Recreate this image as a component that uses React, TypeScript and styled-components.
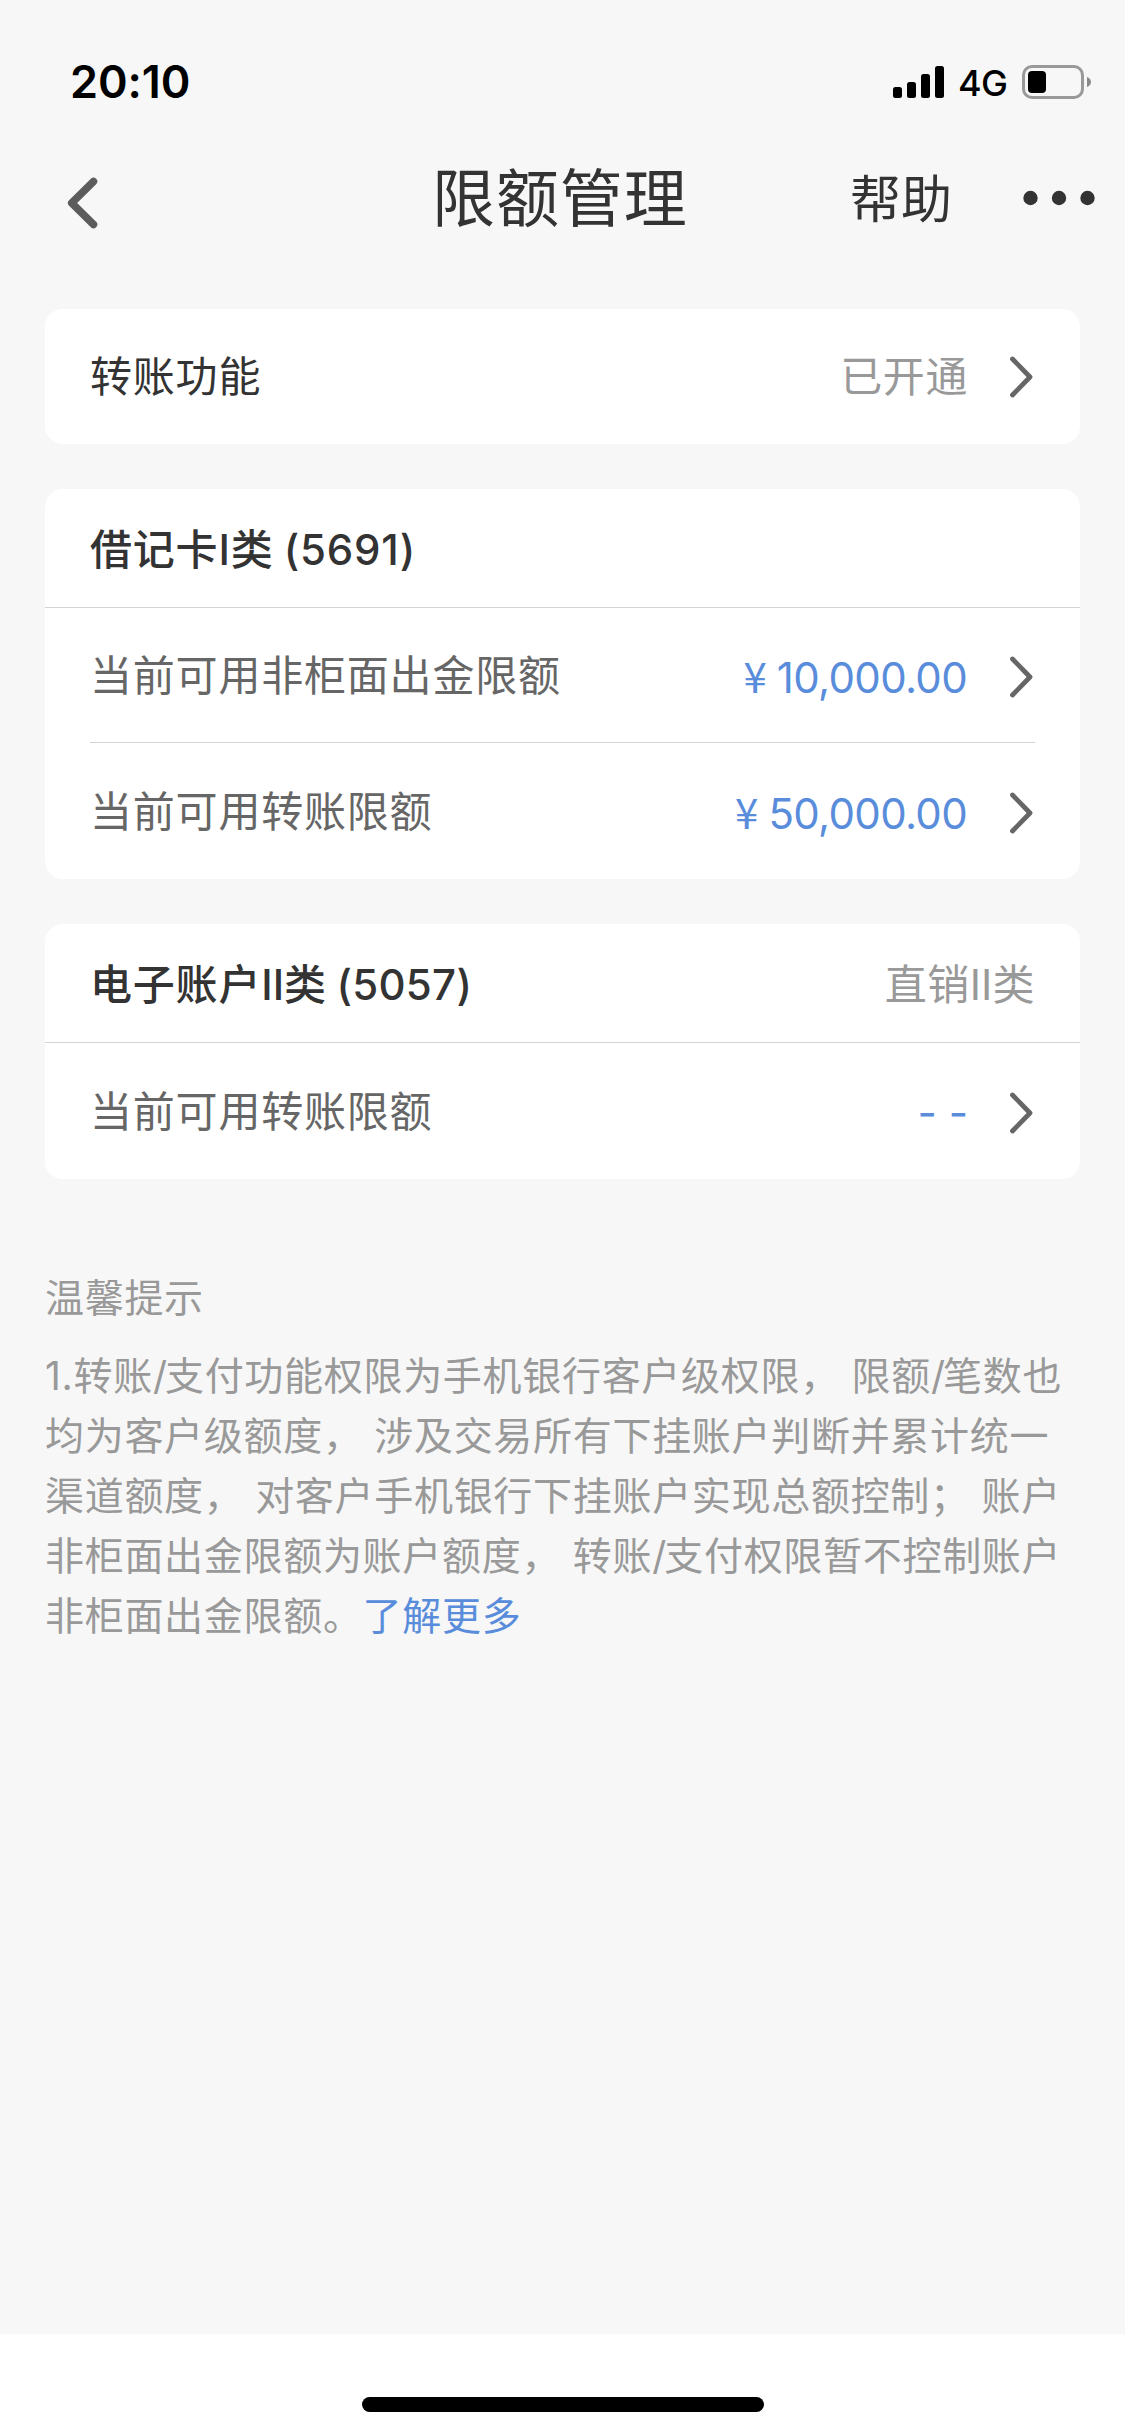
import React, { Fragment } from "react";
import styled, { createGlobalStyle } from "styled-components";

const GlobalStyle = createGlobalStyle`
  * { box-sizing: border-box; }
  body {
    margin: 0;
    background: #f7f7f7;
    font-family: Inter, "Noto Sans CJK SC", sans-serif;
    -webkit-font-smoothing: antialiased;
  }
`;

const Screen = styled.div`
  display: flex;
  flex-direction: column;
  width: 1125px;
  height: 2436px;
  overflow: hidden;
  background: #f7f7f7;
`;

const StatusBar = styled.div`
  display: flex;
  align-items: center;
  justify-content: space-between;
  height: 132px;
  padding: 32px 33px 0 70px;
  color: #000;
`;

const Clock = styled.span`
  font-size: 45px;
  line-height: 54px;
  font-weight: 600;
  letter-spacing: -0.1px;
`;

const Indicators = styled.div`
  display: flex;
  align-items: center;
`;

const Network = styled.span`
  margin: 2px 15px 0 14px;
  font-size: 36px;
  line-height: 44px;
  font-weight: 500;
  letter-spacing: -0.8px;
`;

const NavBar = styled.header`
  display: grid;
  grid-template-columns: 365px 257px 1fr;
  align-items: center;
  height: 132px;
  padding: 0 30px 0 67px;
  color: #333;
`;

const BackButton = styled.button`
  display: flex;
  width: 60px;
  padding: 9px 0 0;
  border: 0;
  background: none;
`;

const Title = styled.h1`
  margin: 0;
  font-size: 63px;
  line-height: 90px;
  font-weight: 400;
  letter-spacing: 0.9px;
  white-space: nowrap;
`;

const NavActions = styled.div`
  display: flex;
  align-items: center;
  justify-content: flex-end;
  gap: 71px;
`;

const Help = styled.span`
  padding-top: 3px;
  font-size: 51px;
  line-height: 74px;
`;

const Content = styled.main`
  display: flex;
  flex: 1;
  flex-direction: column;
  gap: 45px;
  padding: 45px 45px 0;
`;

const Card = styled.section`
  border-radius: 18px;
  background: #fff;
`;

const CardHeader = styled.div`
  display: flex;
  align-items: center;
  justify-content: space-between;
  height: 119px;
  padding: 3px 45px 0;
  border-bottom: 1px solid #d4d4d4;
`;

const CardTitle = styled.h2`
  margin: 0;
  color: #333;
  font-size: 42px;
  line-height: 60px;
  font-weight: 500;
  letter-spacing: 0.8px;
`;

const Roman = styled.span<{ $spacing?: number }>`
  letter-spacing: ${(p) => p.$spacing ?? 0}px;
`;

const CardNumber = styled.span<{ $spacing?: number }>`
  letter-spacing: ${(p) => p.$spacing ?? 0.3}px;
  word-spacing: -2px;
`;

const Muted = styled.span`
  color: #999;
  font-size: 42px;
  line-height: 60px;
  letter-spacing: 0.6px;
`;

const Row = styled.div<{ $divided?: boolean; $height: number }>`
  display: flex;
  align-items: center;
  height: ${(p) => p.$height}px;
  margin: 0 45px;
  padding-top: 1px;
  border-bottom: ${(p) => (p.$divided ? "1px solid #d4d4d4" : "0")};
`;

const Label = styled.span<{ $strong?: boolean }>`
  flex: 1;
  color: ${(p) => (p.$strong ? "#333" : "#666")};
  font-size: 42px;
  line-height: 60px;
  letter-spacing: 0.8px;
`;

const Value = styled.span`
  display: flex;
  align-items: center;
  gap: 41px;
`;

const Amount = styled.span`
  padding-top: 2px;
  color: #598ddb;
  font-size: 42px;
  line-height: 60px;
`;

const Yen = styled.span`
  margin-right: 10px;
  font-family: "Noto Sans CJK SC", sans-serif;
`;

const Digits = styled.span`
  margin-right: 1px;
  letter-spacing: -0.65px;
`;

const Tips = styled.section`
  padding-top: 44px;
  color: #999;
  font-size: 39px;
  line-height: 60px;
  letter-spacing: 0.7px;
`;

const TipsTitle = styled.h3`
  margin: 0 0 18px;
  font-size: inherit;
  font-weight: 400;
`;

const TipsLine = styled.p`
  margin: 0;
  white-space: pre;
`;

const Slash = styled.span`
  letter-spacing: -2px;
`;

const Link = styled.a`
  color: #598ddb;
`;

const HomeArea = styled.footer`
  display: flex;
  justify-content: center;
  height: 102px;
  padding-top: 63px;
  background: #fff;
`;

const HomeIndicator = styled.div`
  width: 402px;
  height: 15px;
  border-radius: 8px;
  background: #000;
`;

const SignalIcon = () => (
  <svg width="51" height="34" viewBox="0 0 51 34">
    <rect x="0" y="22" width="9" height="11" rx="2.5" />
    <rect x="14" y="17" width="9" height="16" rx="2.5" />
    <rect x="28" y="9" width="9" height="24" rx="2.5" />
    <rect x="42" y="1" width="9" height="32" rx="2.5" />
  </svg>
);

const BatteryIcon = () => (
  <svg width="70" height="34" viewBox="0 0 70 34">
    <rect x="1.5" y="1.5" width="59" height="31" rx="8.5" fill="none" stroke="#999" strokeWidth="3" />
    <rect x="6" y="6" width="18" height="22" rx="4" />
    <path d="M65 12c2.4.8 4 2.700 4 5s-1.600 4.200-4 5z" fill="#8a8a8a" />
  </svg>
);

const BackIcon = () => (
  <svg width="31" height="52" viewBox="0 0 31 52">
    <path d="M26.500 4.500 4.700 26l21.800 21.500" fill="none" stroke="#5c5c5c" strokeWidth="7.500" strokeLinecap="round" strokeLinejoin="round" />
  </svg>
);

const MoreIcon = () => (
  <svg width="72" height="16" viewBox="0 0 72 16" fill="#333">
    <circle cx="7.500" cy="8" r="7.200" />
    <circle cx="36" cy="8" r="7.200" />
    <circle cx="64.500" cy="8" r="7.200" />
  </svg>
);

const Arrow = styled.svg.attrs({ width: 26, height: 44, viewBox: "0 0 26 44" })<{ $drop?: number }>`
  margin-top: ${(p) => p.$drop ?? 0}px;
  fill: none;
  stroke: #666;
  stroke-width: 4.8;
  stroke-linecap: round;
  stroke-linejoin: round;
`;

const Chevron = ({ drop }: { drop?: number }) => (
  <Arrow $drop={drop}>
    <path d="M3.500 4 21 22 3.500 40" />
  </Arrow>
);

interface LimitRowProps {
  label: string;
  amount?: string;
  divided?: boolean;
}

const LimitRow = ({ label, amount, divided }: LimitRowProps) => (
  <Row $height={divided ? 135 : 136} $divided={divided}>
    <Label>{label}</Label>
    <Value>
      <Amount>
        {amount ? (
          <>
            <Yen>¥</Yen>
            <Digits>{amount}</Digits>
          </>
        ) : (
          "- -"
        )}
      </Amount>
      <Chevron drop={3} />
    </Value>
  </Row>
);

const TipText = ({ text }: { text: string }) => (
  <>
    {text.split("/").map((part, i) => (
      <Fragment key={i}>
        {i > 0 && <Slash>/</Slash>}
        {part}
      </Fragment>
    ))}
  </>
);

const tips = [
  "1.转账/支付功能权限为手机银行客户级权限， 限额/笔数也",
  "均为客户级额度， 涉及交易所有下挂账户判断并累计统一",
  "渠道额度， 对客户手机银行下挂账户实现总额控制； 账户",
  "非柜面出金限额为账户额度， 转账/支付权限暂不控制账户",
];

export default function App() {
  return (
    <Screen lang="zh-CN">
      <GlobalStyle />
      <StatusBar>
        <Clock>20:10</Clock>
        <Indicators>
          <SignalIcon />
          <Network>4G</Network>
          <BatteryIcon />
        </Indicators>
      </StatusBar>
      <NavBar>
        <BackButton aria-label="返回">
          <BackIcon />
        </BackButton>
        <Title>限额管理</Title>
        <NavActions>
          <Help>帮助</Help>
          <MoreIcon />
        </NavActions>
      </NavBar>
      <Content>
        <Card>
          <Row $height={135}>
            <Label $strong>转账功能</Label>
            <Value>
              <Muted>已开通</Muted>
              <Chevron />
            </Value>
          </Row>
        </Card>
        <Card>
          <CardHeader>
            <CardTitle>
              借记卡<Roman $spacing={1}>I</Roman>类<CardNumber $spacing={0.8}> (5691)</CardNumber>
            </CardTitle>
          </CardHeader>
          <LimitRow label="当前可用非柜面出金限额" amount="10,000.00" divided />
          <LimitRow label="当前可用转账限额" amount="50,000.00" />
        </Card>
        <Card>
          <CardHeader>
            <CardTitle>
              电子账户<Roman>II</Roman>类<CardNumber> (5057)</CardNumber>
            </CardTitle>
            <Muted>
              直销<Roman>II</Roman>类
            </Muted>
          </CardHeader>
          <LimitRow label="当前可用转账限额" />
        </Card>
        <Tips>
          <TipsTitle>温馨提示</TipsTitle>
          {tips.map((line) => (
            <TipsLine key={line}>
              <TipText text={line} />
            </TipsLine>
          ))}
          <TipsLine>
            非柜面出金限额。<Link>了解更多</Link>
          </TipsLine>
        </Tips>
      </Content>
      <HomeArea>
        <HomeIndicator />
      </HomeArea>
    </Screen>
  );
}
